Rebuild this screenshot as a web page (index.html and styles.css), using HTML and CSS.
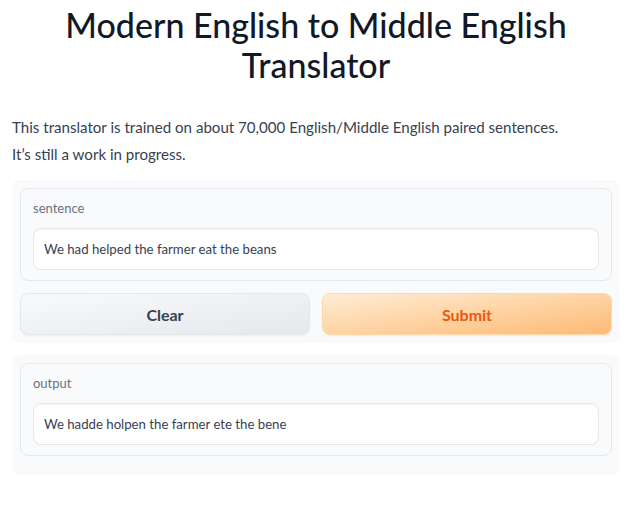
FILE: index.html
```html
<!DOCTYPE html>
<html>
<head>
<meta charset="utf-8">
<link rel="stylesheet" href="styles.css">
</head>
<body>
<div class="app">
  <h1 class="title">Modern English to Middle English Translator</h1>
  <div class="desc">
    <p>This translator is trained on about 70,000 English/Middle English paired sentences.</p>
    <p>It’s still a work in progress.</p>
  </div>
  <div class="panel">
    <div class="block">
      <div class="label">sentence</div>
      <div class="textbox">We had helped the farmer eat the beans</div>
    </div>
    <div class="buttons">
      <button class="btn btn-secondary">Clear</button>
      <button class="btn btn-primary">Submit</button>
    </div>
  </div>
  <div class="panel panel-out">
    <div class="block">
      <div class="label">output</div>
      <div class="textbox">We hadde holpen the farmer ete the bene</div>
    </div>
  </div>
</div>
</body>
</html>
```
FILE: styles.css
```css
* { box-sizing: border-box; }
body {
  margin: 0;
  background: #ffffff;
  font-family: "Lato", "Liberation Sans", sans-serif;
  color: #374151;
}
.app {
  padding: 0 23px 0 12px;
}
.title {
  margin: 5px 0 0;
  text-align: center;
  font-size: 34px;
  line-height: 40px;
  font-weight: 500;
  color: #111827;
}
.desc {
  margin-top: 29px;
  font-size: 15.1px;
  line-height: 27px;
  color: #374151;
}
.desc p { margin: 0; }
.panel {
  margin-top: 12px;
  background: #f9fafb;
  border-radius: 8px;
  padding: 8px;
  display: flex;
  flex-direction: column;
  gap: 12px;
}
.panel-out {
  margin-top: 12px;
  padding-bottom: 19px;
}
.block {
  border: 1px solid #e5e7eb;
  border-radius: 8px;
  background: #f9fafb;
  padding: 10px 12px;
}
.label {
  font-size: 13px;
  line-height: 18px;
  color: #6b7280;
  margin-bottom: 11px;
}
.textbox {
  background: #ffffff;
  border: 1px solid #e5e7eb;
  border-radius: 8px;
  height: 42px;
  padding: 0 10px;
  display: flex;
  align-items: center;
  font-size: 13.2px;
  color: #374151;
  box-shadow: inset 0 1px 2px rgba(0,0,0,0.04);
}
.buttons {
  display: flex;
  gap: 12px;
}
.btn {
  flex: 1;
  height: 42px;
  border-radius: 8px;
  font-family: inherit;
  font-size: 16px;
  font-weight: 700;
  cursor: pointer;
  box-shadow: 0 1px 2px rgba(0,0,0,0.05);
}
.btn-secondary {
  border: 1px solid #e5e7eb;
  background: linear-gradient(to bottom right, #f9fafb, #e5e7eb);
  color: #374151;
}
.btn-primary {
  border: 1px solid #fed7aa;
  background: linear-gradient(to bottom right, #ffedd5, #fdba74);
  color: #ea580c;
}
```
